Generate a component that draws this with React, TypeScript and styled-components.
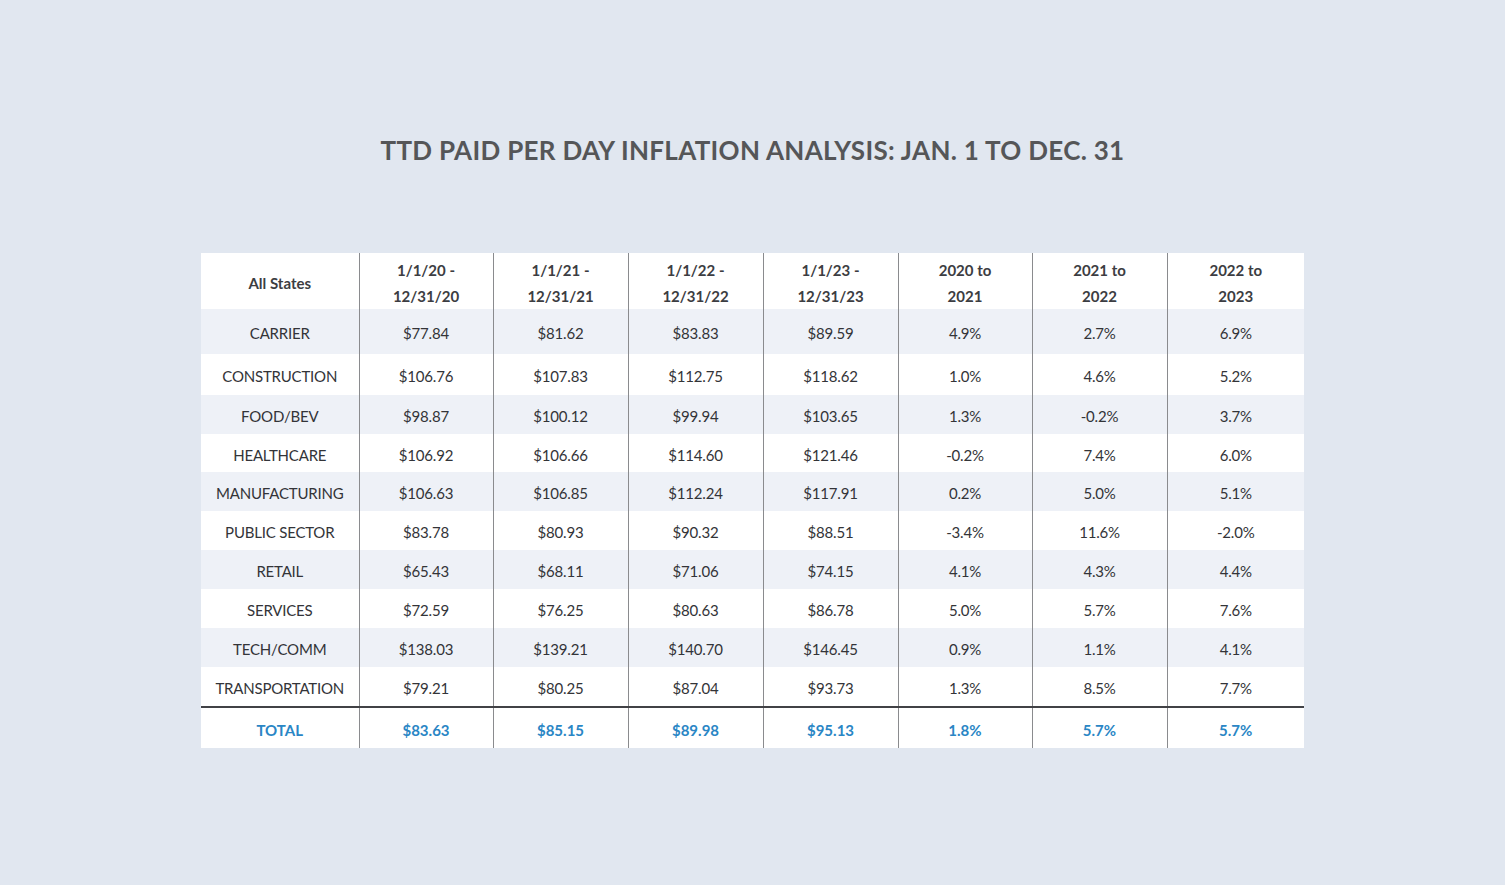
import React from 'react';
import styled, { createGlobalStyle } from 'styled-components';

const GlobalStyle = createGlobalStyle`
  html, body {
    margin: 0;
    padding: 0;
    background: #e1e7f0;
  }
  body {
    font-family: Lato, "Open Sans", "Liberation Sans", sans-serif;
  }
`;

interface Row {
  label: string;
  values: string[];
  height: number;
}

const colWidths = [158, 134, 135, 135, 135, 134, 135, 137];

const headers = [
  ['1/1/20 -', '12/31/20'],
  ['1/1/21 -', '12/31/21'],
  ['1/1/22 -', '12/31/22'],
  ['1/1/23 -', '12/31/23'],
  ['2020 to', '2021'],
  ['2021 to', '2022'],
  ['2022 to', '2023'],
];

const rows: Row[] = [
  { label: 'CARRIER', height: 45, values: ['$77.84', '$81.62', '$83.83', '$89.59', '4.9%', '2.7%', '6.9%'] },
  { label: 'CONSTRUCTION', height: 41, values: ['$106.76', '$107.83', '$112.75', '$118.62', '1.0%', '4.6%', '5.2%'] },
  { label: 'FOOD/BEV', height: 39, values: ['$98.87', '$100.12', '$99.94', '$103.65', '1.3%', '-0.2%', '3.7%'] },
  { label: 'HEALTHCARE', height: 38, values: ['$106.92', '$106.66', '$114.60', '$121.46', '-0.2%', '7.4%', '6.0%'] },
  { label: 'MANUFACTURING', height: 39, values: ['$106.63', '$106.85', '$112.24', '$117.91', '0.2%', '5.0%', '5.1%'] },
  { label: 'PUBLIC SECTOR', height: 39, values: ['$83.78', '$80.93', '$90.32', '$88.51', '-3.4%', '11.6%', '-2.0%'] },
  { label: 'RETAIL', height: 39, values: ['$65.43', '$68.11', '$71.06', '$74.15', '4.1%', '4.3%', '4.4%'] },
  { label: 'SERVICES', height: 39, values: ['$72.59', '$76.25', '$80.63', '$86.78', '5.0%', '5.7%', '7.6%'] },
  { label: 'TECH/COMM', height: 39, values: ['$138.03', '$139.21', '$140.70', '$146.45', '0.9%', '1.1%', '4.1%'] },
  { label: 'TRANSPORTATION', height: 40, values: ['$79.21', '$80.25', '$87.04', '$93.73', '1.3%', '8.5%', '7.7%'] },
];

const total = {
  label: 'TOTAL',
  values: ['$83.63', '$85.15', '$89.98', '$95.13', '1.8%', '5.7%', '5.7%'],
};

export default function App() {
  return (
    <>
      <GlobalStyle />
      <Page>
        <Title>TTD PAID PER DAY INFLATION ANALYSIS: JAN. 1 TO DEC. 31</Title>
        <Table>
          <colgroup>
            {colWidths.map((w, i) => (
              <Col key={i} $width={w} />
            ))}
          </colgroup>
          <thead>
            <HeadRow>
              <HeadCell>All States</HeadCell>
              {headers.map(([a, b]) => (
                <HeadCell key={a + b}>
                  {a}
                  <br />
                  {b}
                </HeadCell>
              ))}
            </HeadRow>
          </thead>
          <tbody>
            {rows.map((row, i) => (
              <BodyRow key={row.label} $striped={i % 2 === 0} $height={row.height}>
                <Cell>{row.label}</Cell>
                {row.values.map((v, j) => (
                  <Cell key={j}>{v}</Cell>
                ))}
              </BodyRow>
            ))}
            <TotalRow>
              <TotalCell>{total.label}</TotalCell>
              {total.values.map((v, j) => (
                <TotalCell key={j}>{v}</TotalCell>
              ))}
            </TotalRow>
          </tbody>
        </Table>
      </Page>
    </>
  );
}

const Page = styled.div`
  width: 1505px;
  height: 885px;
  display: flex;
  flex-direction: column;
  align-items: center;
  box-sizing: border-box;
  padding-top: 133px;
`;

const Title = styled.h1`
  margin: 0 0 86px 0;
  font-size: 26px;
  font-weight: 700;
  color: #555658;
  letter-spacing: 0.3px;
  line-height: 34px;
`;

const Table = styled.table`
  width: 1103px;
  border-collapse: collapse;
  table-layout: fixed;
  background: #ffffff;
`;

const Col = styled.col<{ $width: number }>`
  width: ${(p) => p.$width}px;
`;

const HeadRow = styled.tr`
  height: 56px;
  background: #ffffff;
`;

const cellBorder = `
  border-left: 1.5px solid #8a8b8e;
  &:first-child {
    border-left: none;
  }
`;

const HeadCell = styled.th`
  ${cellBorder}
  padding: 4px 0 0 0;
  font-size: 15px;
  font-weight: 700;
  line-height: 26px;
  color: #3c3d42;
  text-align: center;
  vertical-align: middle;
`;

const BodyRow = styled.tr<{ $striped: boolean; $height: number }>`
  height: ${(p) => p.$height}px;
  background: ${(p) => (p.$striped ? '#eef1f7' : '#ffffff')};
`;

const Cell = styled.td`
  ${cellBorder}
  padding: 3px 0 0 0;
  font-size: 15px;
  font-weight: 400;
  letter-spacing: -0.2px;
  color: #333438;
  text-align: center;
  vertical-align: middle;
`;

const TotalRow = styled.tr`
  height: 41px;
  background: #ffffff;
  border-top: 2px solid #414246;
`;

const TotalCell = styled.td`
  ${cellBorder}
  padding: 3px 0 0 0;
  font-size: 15px;
  font-weight: 700;
  color: #2a86c5;
  text-align: center;
  vertical-align: middle;
`;
